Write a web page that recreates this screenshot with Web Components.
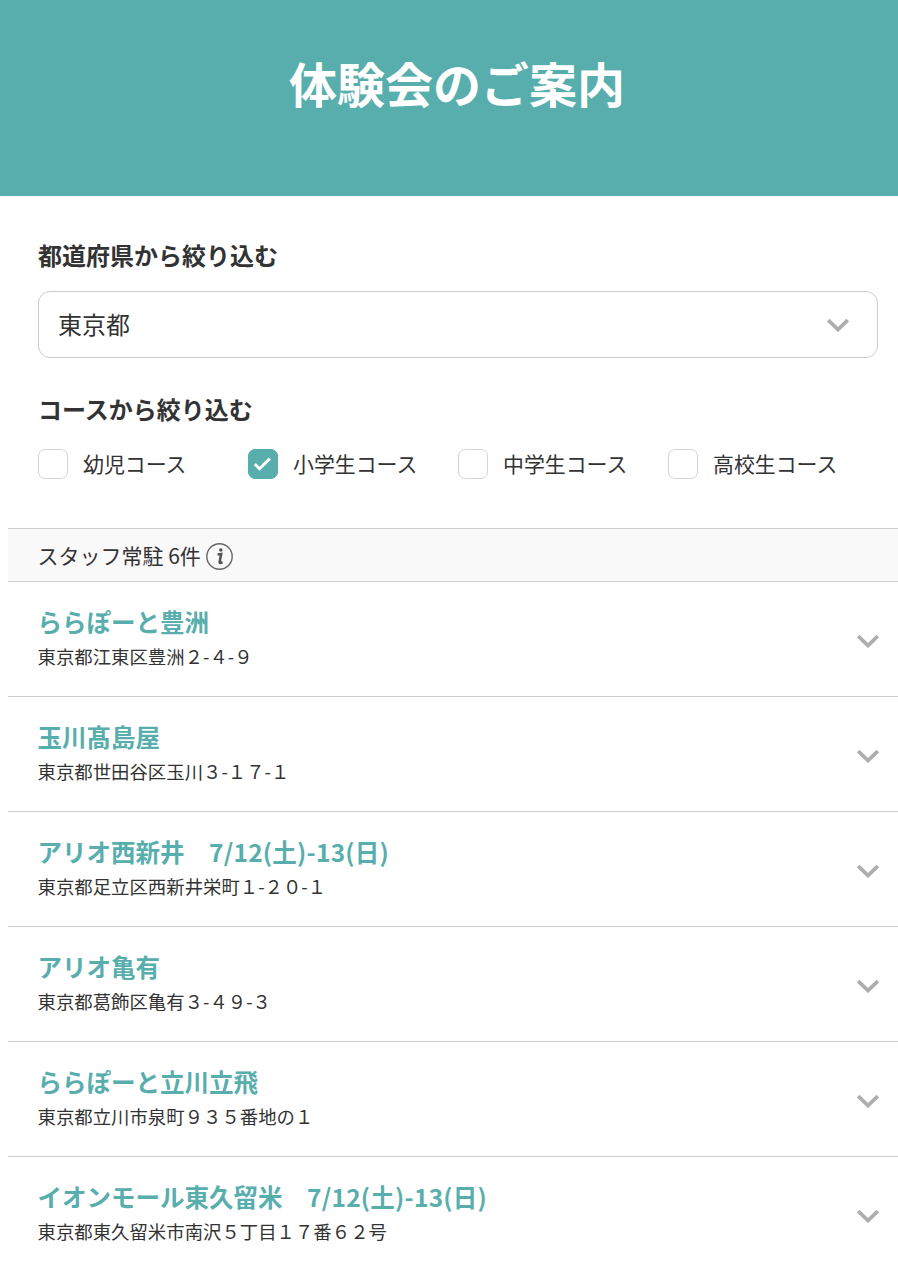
<!DOCTYPE html>
<html lang="ja">
<head>
<meta charset="utf-8">
<title>体験会のご案内</title>
<style>
  html, body { margin: 0; background: #fff; }
  body {
    font-family: "Noto Sans CJK JP", "Noto Sans", sans-serif;
    color: #333;
    overflow-x: hidden;
  }
</style>
</head>
<body>
<page-header>体験会のご案内</page-header>

<filter-group label="都道府県から絞り込む">
  <select-box>東京都</select-box>
</filter-group>

<filter-group label="コースから絞り込む" class="course">
  <check-row>
    <check-option>幼児コース</check-option>
    <check-option checked>小学生コース</check-option>
    <check-option>中学生コース</check-option>
    <check-option>高校生コース</check-option>
  </check-row>
</filter-group>

<result-list>
  <count-bar slot="head">スタッフ常駐 6件</count-bar>
  <store-item name="ららぽーと豊洲" address="東京都江東区豊洲２-４-９"></store-item>
  <store-item name="玉川髙島屋" address="東京都世田谷区玉川３-１７-１"></store-item>
  <store-item name="アリオ西新井　" date="7/12(土)-13(日)" address="東京都足立区西新井栄町１-２０-１"></store-item>
  <store-item name="アリオ亀有" address="東京都葛飾区亀有３-４９-３"></store-item>
  <store-item name="ららぽーと立川立飛" address="東京都立川市泉町９３５番地の１"></store-item>
  <store-item name="イオンモール東久留米　" date="7/12(土)-13(日)" address="東京都東久留米市南沢５丁目１７番６２号"></store-item>
</result-list>

<script>
const CHEVRON = `<svg width="22" height="14" viewBox="0 0 22 14" fill="none" stroke="#aeaeae" stroke-width="3.8"><path d="M1.2 2 L11 11.5 L20.8 2"/></svg>`;

class PageHeader extends HTMLElement {
  constructor() {
    super();
    this.attachShadow({ mode: 'open' });
    this.shadowRoot.innerHTML = `
    <style>
      :host { display: block; background: #58aeac; height: 196px; box-sizing: border-box; padding: 49px 0 0 16px; }
      h1 { margin: 0; text-align: center; color: #fff; font-size: 48px; line-height: 66px; font-weight: 700; }
    </style>
    <h1><slot></slot></h1>`;
  }
}

class FilterGroup extends HTMLElement {
  constructor() {
    super();
    this.attachShadow({ mode: 'open' });
    this.shadowRoot.innerHTML = `
    <style>
      :host { display: block; padding: 41px 20px 0 38px; }
      :host(.course) { padding-top: 33px; }
      h2 { margin: 0 0 18px; font-size: 24px; line-height: 36px; font-weight: 700; color: #333; }
      :host(.course) h2 { margin-bottom: 22px; }
    </style>
    <h2></h2>
    <slot></slot>`;
  }

  connectedCallback() {
    this.shadowRoot.querySelector('h2').textContent = this.getAttribute('label');
  }
}

class SelectBox extends HTMLElement {
  constructor() {
    super();
    this.attachShadow({ mode: 'open' });
    this.shadowRoot.innerHTML = `
    <style>
      :host { display: flex; align-items: center; justify-content: space-between; height: 67px; box-sizing: border-box;
        border: 1px solid #ccc; border-radius: 12px; padding: 0 28px 0 19px; font-size: 24px; color: #333; }
      span { margin-bottom: 2px; }
    </style>
    <span><slot></slot></span>
    ${CHEVRON}`;
  }
}

class CheckRow extends HTMLElement {
  constructor() {
    super();
    this.attachShadow({ mode: 'open' });
    this.shadowRoot.innerHTML = `
    <style>
      :host { display: grid; grid-template-columns: repeat(4, 210px); }
    </style>
    <slot></slot>`;
  }
}

class CheckOption extends HTMLElement {
  constructor() {
    super();
    this.attachShadow({ mode: 'open' });
    this.shadowRoot.innerHTML = `
    <style>
      :host { display: flex; align-items: center; gap: 15px; height: 30px; font-size: 20.9px; color: #333; white-space: nowrap; }
      .box { width: 30px; height: 30px; box-sizing: border-box; border: 1px solid #d4d4d4; border-radius: 7px; background: #fff;
        display: flex; align-items: center; justify-content: center; }
      :host([checked]) .box { background: #58aeac; border-color: #58aeac; }
      svg { display: none; }
      :host([checked]) svg { display: block; }
      .label { margin-bottom: 3px; }
    </style>
    <span class="box"><svg width="18" height="14" viewBox="0 0 18 14" fill="none" stroke="#fff" stroke-width="3"><path d="M0.8 7 L5.5 11.7 L15.8 1.6"/></svg></span>
    <span class="label"><slot></slot></span>`;
  }
}

class ResultList extends HTMLElement {
  constructor() {
    super();
    this.attachShadow({ mode: 'open' });
    this.shadowRoot.innerHTML = `
    <style>
      :host { display: block; margin: 49px 0 0 8px; }
    </style>
    <slot name="head"></slot>
    <slot></slot>`;
  }
}

class CountBar extends HTMLElement {
  constructor() {
    super();
    this.attachShadow({ mode: 'open' });
    this.shadowRoot.innerHTML = `
    <style>
      :host { display: flex; align-items: center; gap: 5px; height: 54px; box-sizing: border-box; padding-left: 29.5px;
        background: #f9f9f9; border-top: 1px solid #ccc; border-bottom: 1px solid #ccc; font-size: 21px; color: #333; }
      svg { display: block; margin-top: 3px; }
    </style>
    <span><slot></slot></span>
    <svg width="27" height="27" viewBox="0 0 27 27" fill="none" stroke="#666"><circle cx="13.5" cy="13.5" r="12.7" stroke-width="1.4"/><circle cx="14.8" cy="7" r="1.8" fill="#555" stroke="none"/><path d="M11.6 11.6 L15.2 11 L13.6 19 Q13.4 20 14.4 19.9 L16.6 19.2" stroke="#555" stroke-width="2.5"/></svg>`;
  }
}

class StoreItem extends HTMLElement {
  constructor() {
    super();
    this.attachShadow({ mode: 'open' });
    this.shadowRoot.innerHTML = `
    <style>
      :host { display: flex; align-items: center; justify-content: space-between; height: 115px; box-sizing: border-box;
        border-bottom: 1px solid #ccc; padding: 0 19px 0 29.5px; }
      .text { margin-top: -4px; }
      .name { font-size: 24.5px; line-height: 36px; font-weight: 700; color: #58aeac; white-space: nowrap; font-kerning: none; }
      .date { letter-spacing: 0.25px; }
      .address { font-size: 18.4px; line-height: 28px; margin-top: 2px; color: #333; white-space: nowrap; }
      svg { display: block; margin-top: 3px; }
    </style>
    <div class="text">
      <div class="name"><span class="title"></span><span class="date"></span></div>
      <div class="address"></div>
    </div>
    ${CHEVRON}`;
  }

  connectedCallback() {
    this.shadowRoot.querySelector('.title').textContent = this.getAttribute('name');
    this.shadowRoot.querySelector('.date').textContent = this.getAttribute('date') || '';
    this.shadowRoot.querySelector('.address').textContent = this.getAttribute('address');
  }
}

customElements.define('page-header', PageHeader);
customElements.define('filter-group', FilterGroup);
customElements.define('select-box', SelectBox);
customElements.define('check-row', CheckRow);
customElements.define('check-option', CheckOption);
customElements.define('result-list', ResultList);
customElements.define('count-bar', CountBar);
customElements.define('store-item', StoreItem);
</script>
</body>
</html>
